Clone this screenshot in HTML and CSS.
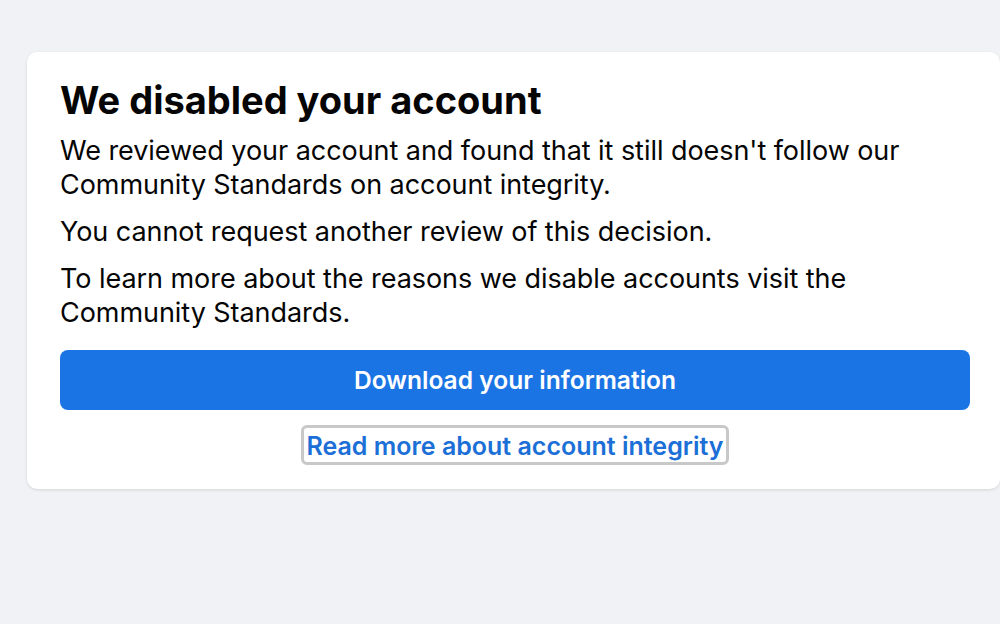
FILE: index.html
```html
<!DOCTYPE html>
<html lang="en">
<head>
<meta charset="utf-8">
<title>We disabled your account</title>
<link rel="stylesheet" href="styles.css">
</head>
<body>
<main class="card">
  <h1 class="title">We disabled your account</h1>
  <p class="para">We reviewed your account and found that it still doesn't follow our Community Standards on account integrity.</p>
  <p class="para">You cannot request another review of this decision.</p>
  <p class="para">To learn more about the reasons we disable accounts visit the Community Standards.</p>
  <div class="actions">
    <button class="primary" type="button">Download your information</button>
    <a class="link" href="#">Read more about account integrity</a>
  </div>
</main>
</body>
</html>
```
FILE: styles.css
```css
html, body {
  margin: 0;
  padding: 0;
}
body {
  background: #f0f2f5;
  font-family: Inter, "Noto Sans", "Liberation Sans", sans-serif;
  color: #050505;
  width: 1000px;
  height: 624px;
  overflow: hidden;
}
.card {
  margin: 52px 0 0 27px;
  width: 973px;
  box-sizing: border-box;
  background: #ffffff;
  border-radius: 10px;
  box-shadow: 0 1px 3px rgba(0, 0, 0, 0.12);
  padding: 26px 30px 27px 33px;
}
.title {
  margin: 0 0 12px 0;
  font-size: 38px;
  line-height: 44px;
  font-weight: 700;
  letter-spacing: 0;
}
.para {
  margin: 0 0 13px 0;
  font-size: 27px;
  line-height: 34px;
  font-weight: 400;
  letter-spacing: -0.05px;
}
.actions {
  display: flex;
  flex-direction: column;
  align-items: center;
  gap: 18px;
  padding-top: 7px;
}
.primary {
  width: 100%;
  height: 60px;
  border: none;
  border-radius: 8px;
  background: #1b74e4;
  color: #ffffff;
  font-family: inherit;
  font-size: 24.6px;
  font-weight: 600;
}
.link {
  color: #1b6fd6;
  font-size: 25px;
  font-weight: 600;
  text-decoration: none;
  line-height: 31px;
  padding: 3px 2px 0 2px;
  outline: 3px solid #c8c8c8;
  border-radius: 3px;
}
```
